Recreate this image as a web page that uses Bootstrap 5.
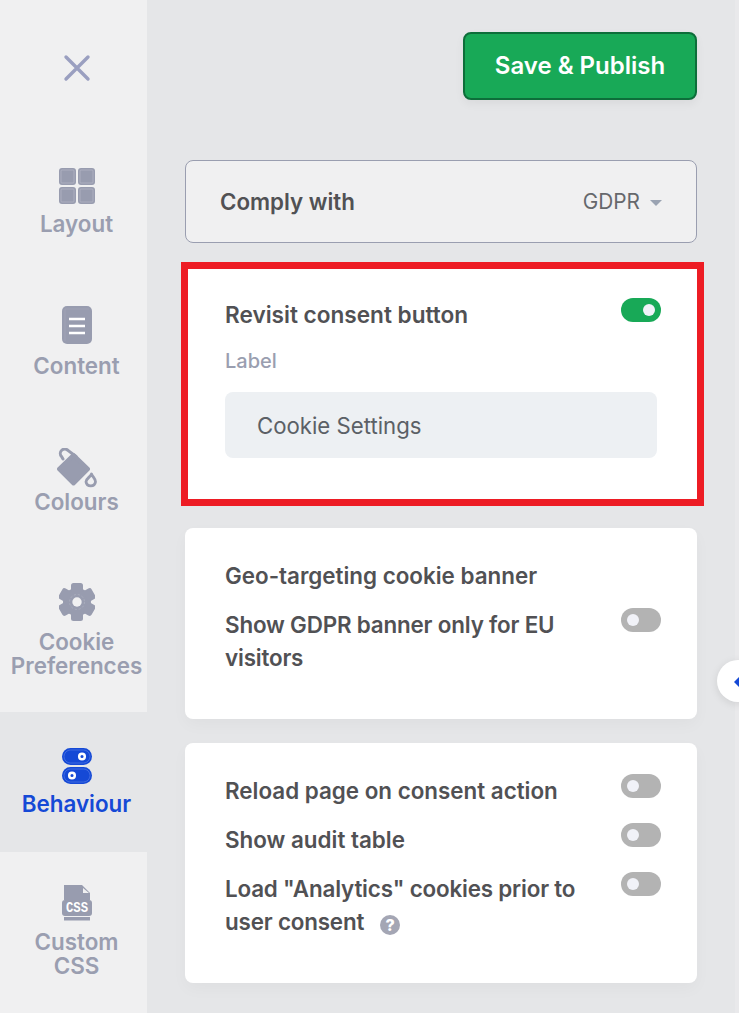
<!DOCTYPE html>
<html lang="en">
  <head>
    <meta charset="UTF-8" />
    <title>Cookie banner editor</title>
    <link href="https://cdn.jsdelivr.net/npm/bootstrap@5.3.0/dist/css/bootstrap.min.css" rel="stylesheet" />
    <style>
      html, body { height: 1013px; overflow: hidden; }
      body { font-family: Inter, "Liberation Sans", sans-serif; background: #e5e6e8; color: #515154; position: relative; }
      .editor { height: 1013px; }
      .side { width: 147px; flex: none; background: #f0f0f1; }
      .side-close { height: 132px; padding: 54px 0 0 6px; }
      .side-item { padding: 36px 0 0 6px; font-size: 22.4px; font-weight: 600; line-height: 24px; color: #9a9eb0; text-align: center; white-space: nowrap; }
      .side-item svg { display: block; margin: 0 auto; }
      .side-item.is-active { background: #e5e6e8; color: #1549d6; }
      .h-layout { height: 138px; }
      .h-content { height: 142px; }
      .h-colours { height: 135px; }
      .h-cookie { height: 165px; }
      .h-behaviour { height: 140px; }
      .h-css { padding-top: 33px; }
      .lab-8 { margin-top: 8px; }
      .lab-9 { margin-top: 9px; }
      .lab-10 { margin-top: 10px; }
      .lab-2 { margin-top: 2px; }
      .main-col { padding: 32px 42px 0 38px; width: 592px; flex: none; }
      .btn-publish { width: 234px; height: 68px; font-size: 24px; font-weight: 600; color: #fff; background: #18a957; border: 2px solid #0d6e3a; border-radius: 8px; box-shadow: 0 4px 10px rgba(0,0,0,.05); }
      .comply { margin-top: 60px; height: 83px; padding: 0 34px 0 34px; background: #f0f0f1; border: 1px solid #9a9eb0; border-radius: 8px; }
      .comply-label { font-size: 22.3px; font-weight: 600; }
      .comply-select { font-size: 20.8px; color: #66686c; }
      .comply-select.dropdown-toggle::after { margin-left: 10px; vertical-align: 3px; border-top: 6px solid #9aa3b2; border-right: 6px solid transparent; border-left: 6px solid transparent; border-bottom: 0; }
      .red-box { margin: 19px -7px 22px -4px; border: 7px solid #ed1c24; background: #fff; padding: 29px 36px 0 37px; height: 244px; }
      .panel { border: 0; border-radius: 8px; background: #fff; padding: 31px 36px 45px 40px; margin-bottom: 24px; box-shadow: 0 6px 16px rgba(0,0,0,.03); }
      .opt { font-size: 22.4px; font-weight: 600; line-height: 33px; margin-bottom: 16px; }
      .opt-wide { font-size: 22.6px; }
      .opt-text { width: 356px; }
      .opt-snug { letter-spacing: -.18px; }
      .field-label { font-size: 20px; font-weight: 500; color: #9a9eb0; line-height: 24px; margin: 18px 0 19px; }
      .field-input, .field-input:focus { height: 66px; width: 432px; padding: 0 32px; font-size: 22.2px; color: #5b6066; background: #edf0f3; border: 0; border-radius: 8px; box-shadow: none; }
      .form-switch.sw { padding: 0; min-height: 0; margin: 0; flex: none; line-height: 0; }
      .form-switch.sw .form-check-input { width: 40px; height: 24px; margin: 0; border: 0; float: none; background-color: #b3b3b3; background-image: url("data:image/svg+xml,%3csvg xmlns='http://www.w3.org/2000/svg' viewBox='-4 -4 8 8'%3e%3ccircle r='2' fill='%23f1f2f8'/%3e%3c/svg%3e"); }
      .form-switch.sw .form-check-input:checked { background-color: #18a957; }
      .help-dot { display: inline-flex; align-items: center; justify-content: center; width: 20px; height: 20px; margin-left: 16px; border-radius: 50%; background: #a4a6b4; color: #fff; font-size: 16px; font-weight: 800; line-height: 1; vertical-align: -1px; }
      .edge-strip { flex: 1 1 auto; }
      .edge-strip::after { content: ""; position: absolute; top: 0; right: 0; bottom: 0; width: 4px; background: #e9e9eb; }
      .collapse-tab { position: absolute; left: 717px; top: 660px; width: 42px; height: 42px; border-radius: 50%; background: #fff; box-shadow: 0 2px 8px rgba(0,0,0,.1); z-index: 2; }
      .collapse-tab svg { position: absolute; left: 16px; top: 16px; }
    </style>
  </head>
  <body>
    <div class="editor d-flex">
      <nav class="side d-flex flex-column">
        <div class="side-close text-center">
          <svg width="28" height="28" viewBox="0 0 28 28"><path d="M3 3 25 25M25 3 3 25" stroke="#9a9fc0" stroke-width="3.4" stroke-linecap="round" /></svg>
        </div>
        <div class="side-item h-layout">
          <svg width="36" height="36" viewBox="0 0 36 36">
            <g fill="#989caf">
              <rect width="17" height="17" rx="3" />
              <rect x="19" width="17" height="17" rx="3" />
              <rect y="19" width="17" height="17" rx="3" />
              <rect x="19" y="19" width="17" height="17" rx="3" />
            </g>
            <g fill="none" stroke="#b4b7c5" stroke-width=".7">
              <rect x="2" y="2" width="13" height="13" rx="1" />
              <rect x="21" y="2" width="13" height="13" rx="1" />
              <rect x="2" y="21" width="13" height="13" rx="1" />
              <rect x="21" y="21" width="13" height="13" rx="1" />
            </g>
          </svg>
          <div class="lab-8">Layout</div>
        </div>
        <div class="side-item h-content">
          <svg width="30" height="38" viewBox="0 0 30 38">
            <rect width="30" height="38" rx="5" fill="#989caf" />
            <path d="M27 3H3V35" fill="none" stroke="#b4b7c5" stroke-width=".5" opacity=".6" />
            <path d="M7 13H23M7 20H23M7 27H23" stroke="#fff" stroke-width="2.4" />
          </svg>
          <div class="lab-10">Content</div>
        </div>
        <div class="side-item h-colours">
          <svg width="40" height="40" viewBox="0 0 40 40">
            <path d="M16.500 7 31 21 16.500 35.500 2 21Z" fill="#989caf" stroke="#989caf" stroke-width="4" stroke-linejoin="round" />
            <path d="M6 11 4.500 8.500A4.300 4.300 0 0 1 11 2.500L19 8.500" fill="none" stroke="#989caf" stroke-width="3" stroke-linecap="round" />
            <path d="M34.500 26C35.500 29 38.500 30.500 38.500 33.800A4.800 4.800 0 0 1 29 33.800C29 30.500 33.500 29 34.500 26Z" fill="none" stroke="#989caf" stroke-width="2.800" stroke-linejoin="round" />
          </svg>
          <div class="lab-2">Colours</div>
        </div>
        <div class="side-item h-cookie">
          <svg width="36" height="38" viewBox="0 0 36 38">
            <g transform="translate(18 19)" fill="#989caf">
              <circle r="14" />
              <rect x="-6" y="-19" width="12" height="9" rx="2.500" />
              <rect x="-6" y="-19" width="12" height="9" rx="2.500" transform="rotate(60)" />
              <rect x="-6" y="-19" width="12" height="9" rx="2.500" transform="rotate(120)" />
              <rect x="-6" y="-19" width="12" height="9" rx="2.500" transform="rotate(180)" />
              <rect x="-6" y="-19" width="12" height="9" rx="2.500" transform="rotate(240)" />
              <rect x="-6" y="-19" width="12" height="9" rx="2.500" transform="rotate(300)" />
              <circle r="4.700" fill="#f0f0f1" />
              <circle r="7.500" fill="none" stroke="#b4b7c5" stroke-width=".6" stroke-dasharray="2 2" />
            </g>
          </svg>
          <div class="lab-9">Cookie<br />Preferences</div>
        </div>
        <div class="side-item is-active h-behaviour">
          <svg width="30" height="36" viewBox="0 0 30 36">
            <rect width="30" height="17" rx="8.500" fill="#1549d6" />
            <rect y="19" width="30" height="17" rx="8.500" fill="#1549d6" />
            <rect x="2" y="2" width="26" height="13" rx="6.500" fill="none" stroke="#5a80e6" stroke-width=".6" />
            <rect x="2" y="21" width="26" height="13" rx="6.500" fill="none" stroke="#5a80e6" stroke-width=".6" />
            <circle cx="20" cy="8.500" r="2.800" fill="#1549d6" stroke="#fff" stroke-width="2.500" />
            <circle cx="10" cy="27.500" r="2.800" fill="#1549d6" stroke="#fff" stroke-width="2.500" />
          </svg>
          <div class="lab-8">Behaviour</div>
        </div>
        <div class="side-item h-css">
          <svg width="30" height="36" viewBox="0 0 30 36">
            <path d="M2 15V0H20L28 8V15Z" fill="#989caf" />
            <path d="M21 3 27 8H21Z" fill="#f0f0f1" />
            <rect y="15" width="30" height="16" rx="3" fill="#989caf" />
            <rect x="2" y="32" width="26" height="3.500" fill="#989caf" />
            <text x="4" y="27" textLength="22" lengthAdjust="spacingAndGlyphs" font-family="Liberation Mono, monospace" font-size="15" font-weight="700" fill="#fff">CSS</text>
          </svg>
          <div class="lab-9">Custom<br />CSS</div>
        </div>
      </nav>

      <main class="main-col">
        <div class="d-flex justify-content-end">
          <button type="button" class="btn btn-publish">Save &amp; Publish</button>
        </div>

        <div class="comply d-flex align-items-center justify-content-between">
          <span class="comply-label">Comply with</span>
          <span class="comply-select dropdown-toggle">GDPR</span>
        </div>

        <section class="red-box">
          <div class="d-flex justify-content-between align-items-start opt opt-wide mb-0">
            <span>Revisit consent button</span>
            <div class="form-check form-switch sw"><input class="form-check-input" type="checkbox" role="switch" checked /></div>
          </div>
          <p class="field-label">Label</p>
          <input class="form-control field-input" type="text" value="Cookie Settings" />
        </section>

        <section class="card panel">
          <div class="opt">Geo-targeting cookie banner</div>
          <div class="d-flex justify-content-between align-items-start opt mb-0">
            <span class="opt-text opt-snug">Show GDPR banner only for EU visitors</span>
            <div class="form-check form-switch sw"><input class="form-check-input" type="checkbox" role="switch" /></div>
          </div>
        </section>

        <section class="card panel">
          <div class="d-flex justify-content-between align-items-start opt">
            <span class="opt-text">Reload page on consent action</span>
            <div class="form-check form-switch sw"><input class="form-check-input" type="checkbox" role="switch" /></div>
          </div>
          <div class="d-flex justify-content-between align-items-start opt">
            <span class="opt-text">Show audit table</span>
            <div class="form-check form-switch sw"><input class="form-check-input" type="checkbox" role="switch" /></div>
          </div>
          <div class="d-flex justify-content-between align-items-start opt mb-0">
            <div class="opt-text opt-snug"><span>Load "Analytics" cookies prior to user consent</span><span class="help-dot">?</span></div>
            <div class="form-check form-switch sw"><input class="form-check-input" type="checkbox" role="switch" /></div>
          </div>
        </section>
      </main>
      <div class="edge-strip"></div>
    </div>

    <div class="collapse-tab">
      <svg width="12" height="12" viewBox="0 0 12 12"><path d="M1 6 6 1 11 6 6 11Z" fill="#1549d6" /></svg>
    </div>
    <script src="https://cdn.jsdelivr.net/npm/bootstrap@5.3.0/dist/js/bootstrap.bundle.min.js"></script>
  </body>
</html>
